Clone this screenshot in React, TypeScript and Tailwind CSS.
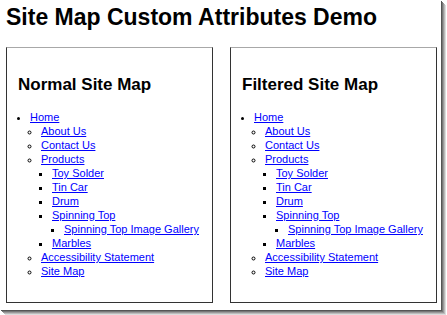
const tree = [
  {
    label: "Home",
    children: [
      { label: "About Us" },
      { label: "Contact Us" },
      {
        label: "Products",
        children: [
          { label: "Toy Solder" },
          { label: "Tin Car" },
          { label: "Drum" },
          { label: "Spinning Top", children: [{ label: "Spinning Top Image Gallery" }] },
          { label: "Marbles" },
        ],
      },
      { label: "Accessibility Statement" },
      { label: "Site Map" },
    ],
  },
];

type Node = { label: string; children?: Node[] };

const listStyles = ["list-disc pl-[23px]", "list-[circle] pl-[11px]", "list-[square] pl-[11px]", "list-[square] pl-[12px]"];

function SiteList({ nodes, depth }: { nodes: Node[]; depth: number }) {
  return (
    <ul className={`${listStyles[depth]} list-outside`}>
      {nodes.map((node) => (
        <li key={node.label}>
          <a href="#" className="text-[#0000ff] underline">
            {node.label}
          </a>
          {node.children && <SiteList nodes={node.children} depth={depth + 1} />}
        </li>
      ))}
    </ul>
  );
}

function MapBox({ title }: { title: string }) {
  return (
    <div className="w-[207px] border border-[#333] border-t-[#a8a8a8] pb-[24px]">
      <h2 className="mt-[27px] pl-[11px] text-[17px] font-bold leading-[20px] text-black">{title}</h2>
      <div className="mt-[15px] text-[11px] leading-[14px]">
        <SiteList nodes={tree} depth={0} />
      </div>
    </div>
  );
}

export default function App() {
  return (
    <div className="h-[315px] w-[447px] bg-white" style={{ fontFamily: '"Liberation Sans", Arial, sans-serif' }}>
      <div className="h-[310px] w-[441px] bg-white shadow-[1px_1px_0_#555,2px_2px_0_#777,3px_3px_0_#999,4px_4px_0_#bbb,5px_5px_0_#ddd]">
        <h1 className="pl-[6px] pt-[4px] text-[23px] font-bold leading-[26px] text-black">Site Map Custom Attributes Demo</h1>
        <div className="mt-[17px] flex gap-[17px] pl-[6px]">
          <MapBox title="Normal Site Map" />
          <MapBox title="Filtered Site Map" />
        </div>
      </div>
    </div>
  );
}
